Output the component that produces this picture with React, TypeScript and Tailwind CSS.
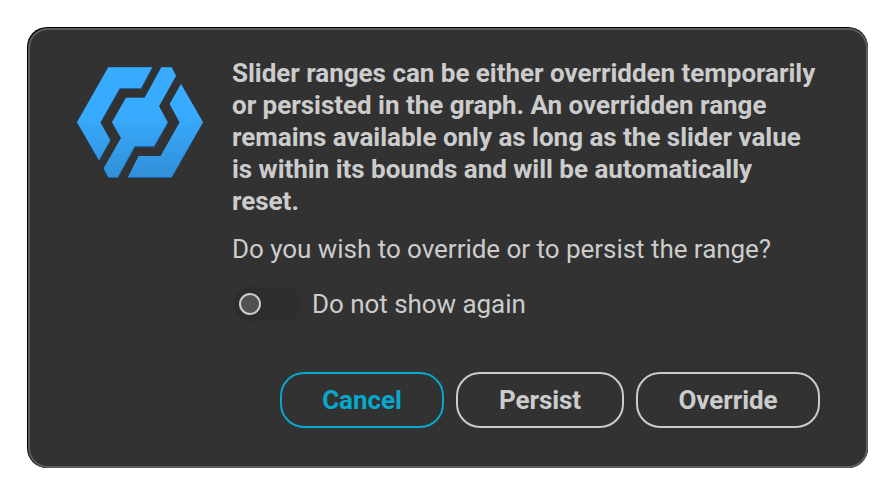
import React from "react";

function Logo() {
  return (
    <svg className="mt-[10px] h-[111px] w-[126px] shrink-0" viewBox="36 36 378 333" aria-hidden="true">
      <defs>
        <linearGradient id="logoFill" gradientUnits="userSpaceOnUse" x1="0" y1="36" x2="0" y2="369">
          <stop offset="0" stopColor="#38abff" />
          <stop offset="0.42" stopColor="#38abff" />
          <stop offset="1" stopColor="#318fd7" />
        </linearGradient>
      </defs>
      <g id="shade" fill="#1667b0">
        <path d="M130 37H262L229 102H165L107 203L136 256L102 319L36 202Z" />
        <path d="M289 37H320L333 62L282 154L309 203L268 277H210L159 369H130L116 342L168 249L141 202L183 128H239Z" />
        <path d="M348 87L414 202L320 369H188L221 303H287L344 203L314 147Z" />
      </g>
      <g fill="url(#logoFill)">
        <path d="M130 37H262L228 99H164L106 202L136 256L102 315L36 202Z" />
        <path d="M289 37H320L333 62L282 154L308 202L267 273H209L158 366H130L116 340L168 249L141 202L183 128H239Z" />
        <path d="M348 87L414 202L320 366H189L221 303H287L344 202L314 147Z" />
      </g>
    </svg>
  );
}

const buttons = [
  { label: "Cancel", style: "w-[164px] border-[#06a9cb] text-[#06a9cb]" },
  { label: "Persist", style: "w-[168px] border-[#cccccc] text-[#cccccc]" },
  { label: "Override", style: "w-[184px] border-[#cccccc] text-[#cccccc]" },
];

export default function App() {
  return (
    <div className="h-[500px] w-[896px] overflow-hidden bg-white p-[27px] font-['Roboto',sans-serif] text-[26px] leading-8 text-[#cccccc]">
      <div role="dialog" className="h-[441px] w-[841px] rounded-[20px] bg-black pt-px pl-px">
        <div className="flex h-[440px] w-[840px] flex-col rounded-[20px] border-2 border-[#5c5c5c] bg-[#323232] pt-[27px] pr-[46px] pl-[47px]">
          <div className="flex gap-[29px]">
            <Logo />
            <div className="whitespace-nowrap">
              <p className="font-bold tracking-[-0.025px]">
                Slider ranges can be either overridden temporarily
                <br />
                or persisted in the graph. An overridden range
                <br />
                remains available only as long as the slider value
                <br />
                is within its bounds and will be automatically
                <br />
                reset.
              </p>
              <p className="mt-4 tracking-[-0.035px]">Do you wish to override or to persist the range?</p>
              <label className="mt-[22px] flex h-[34px] items-center gap-[11px] pl-px">
                <span className="flex h-[34px] w-[68px] items-center rounded-full bg-[#2d2d2d] pl-[6px]">
                  <span className="h-[22px] w-[22px] rounded-full border-2 border-[#cccccc] bg-[#515151]" />
                </span>
                <span className="tracking-[-0.05px]">Do not show again</span>
              </label>
            </div>
          </div>
          <div className="mt-[51px] flex justify-end gap-3">
            {buttons.map((b) => (
              <button key={b.label} className={`h-14 rounded-[24px] border-2 font-bold tracking-[-0.05px] ${b.style}`}>
                {b.label}
              </button>
            ))}
          </div>
        </div>
      </div>
    </div>
  );
}
